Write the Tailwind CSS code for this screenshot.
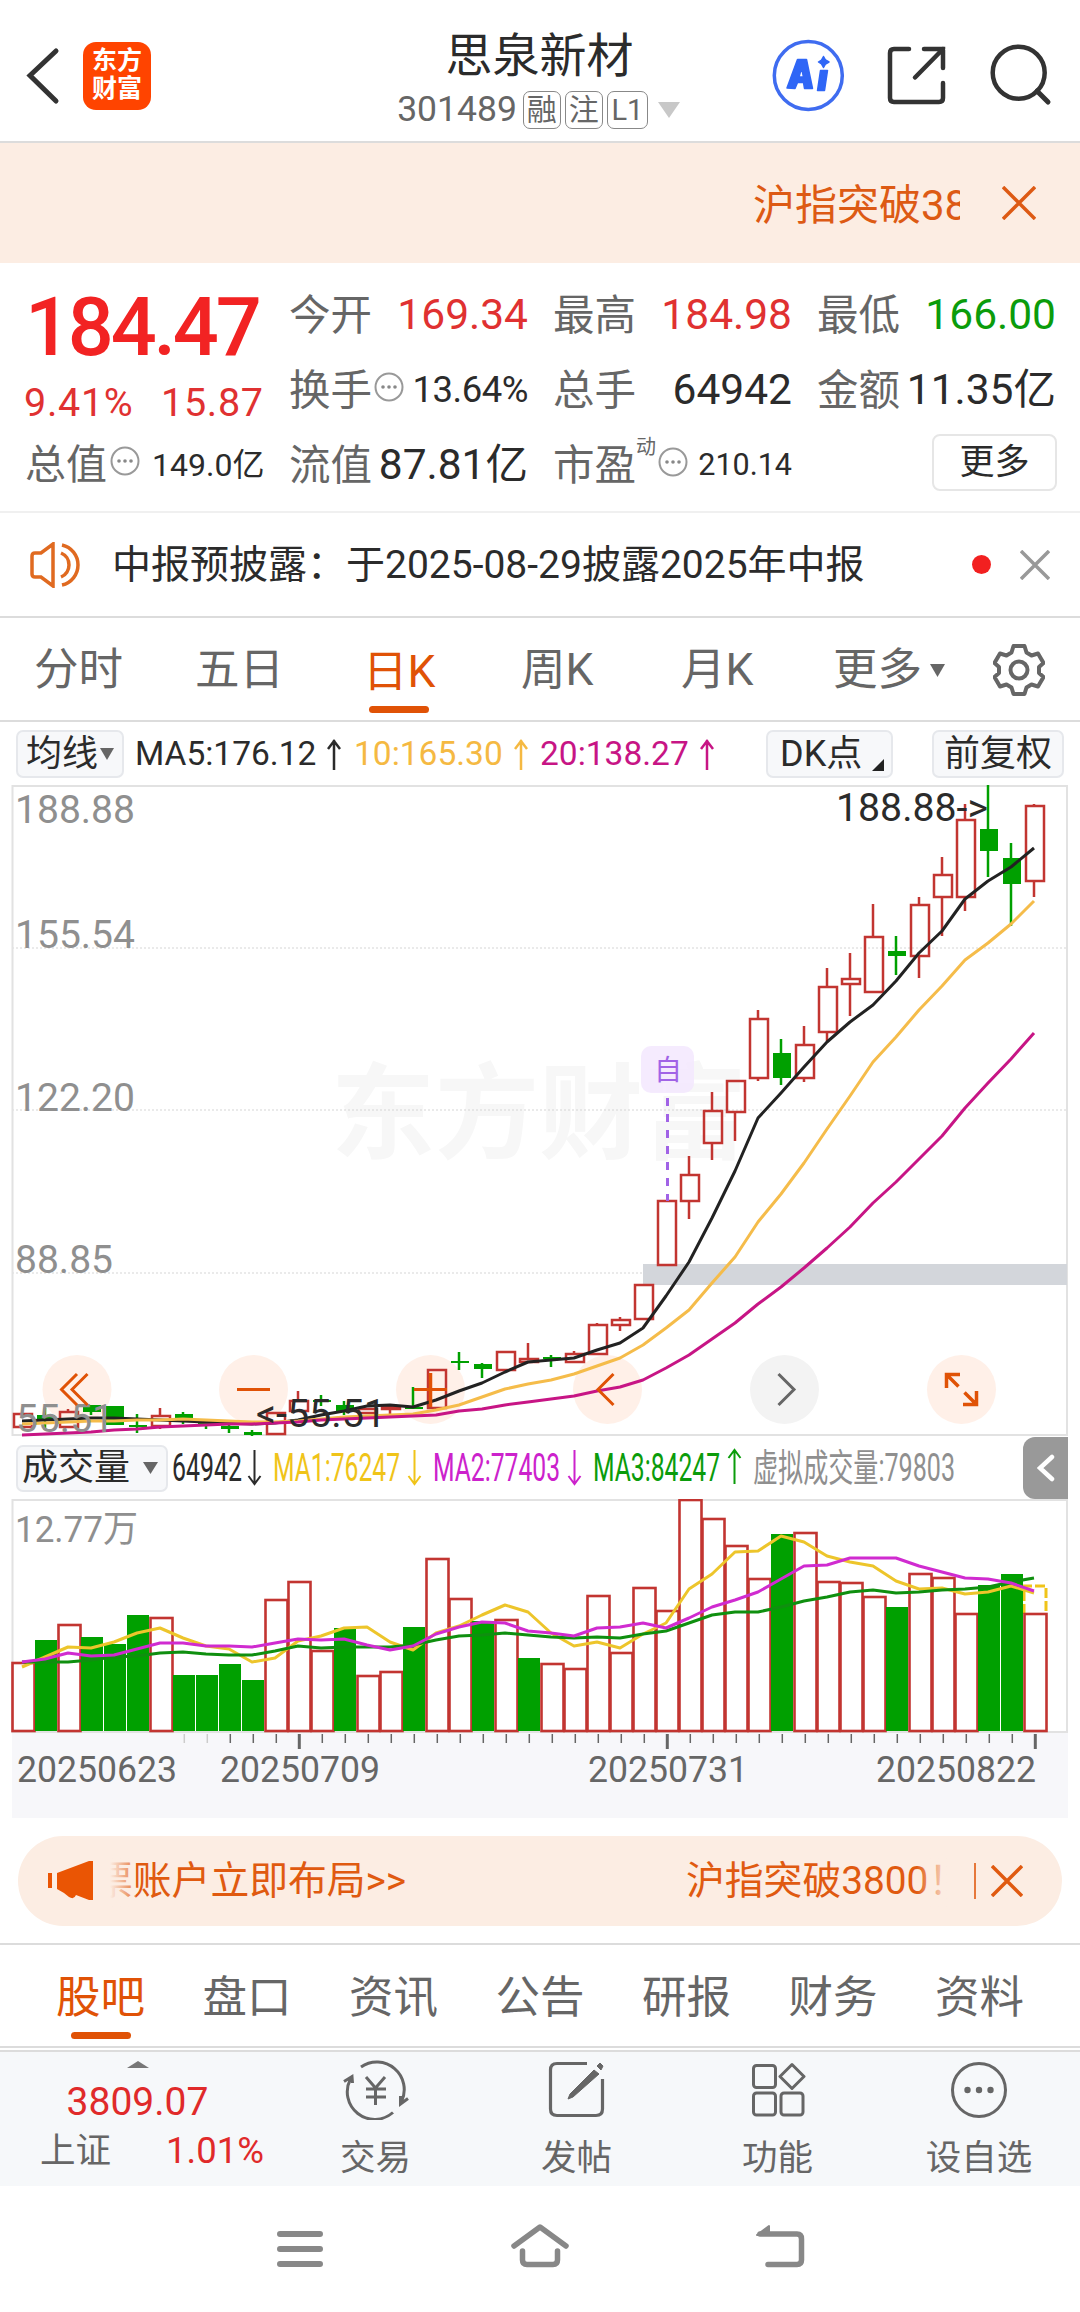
<!DOCTYPE html>
<html lang="zh-CN">

<head>
    <meta charset="UTF-8">
    <meta name="viewport" content="width=device-width, initial-scale=1.0">
    <title>思泉新材 301489</title>
    <script src="https://cdn.jsdelivr.net/npm/@tailwindcss/browser@4"></script>
</head>

<body class="w-[1080px] h-[2312px] overflow-hidden bg-white text-[#2b2b2b] leading-none whitespace-nowrap font-['Roboto','Noto_Sans_CJK_SC',sans-serif]">

    <!-- Header -->
    <header class="h-[143px] border-b-2 border-[#dcdcdc] flex">
        <div class="w-[398px] flex items-start pl-[26px] pt-[42px]">
            <svg class="w-[34px] h-[67px]" viewBox="26 42 34 67" fill="none" stroke="#333" stroke-width="5"><path d="M56 51 30 75.500 56 101" stroke-linecap="round" /></svg>
            <div class="ml-[23px] w-[68px] h-[68px] rounded-[13px] bg-[#ff4400] text-white text-[25px] leading-[28px] font-bold text-center pt-[5px]">东方<br>财富</div>
        </div>
        <div class="w-[283px] flex flex-col items-center pt-[33px]">
            <h1 class="text-[47px] leading-[46px]">思泉新材</h1>
            <div class="mt-[12px] -ml-[2px] flex items-center text-[#666]">
                <span class="text-[35.500px]">301489</span>
                <span class="ml-[6px] w-[38px] h-[38px] border-[1.500px] border-[#888] rounded-[7px] text-[30px] flex items-center justify-center">融</span>
                <span class="ml-[4px] w-[38px] h-[38px] border-[1.500px] border-[#888] rounded-[7px] text-[30px] flex items-center justify-center">注</span>
                <span class="ml-[4px] w-[41px] h-[38px] border-[1.500px] border-[#888] rounded-[7px] text-[29px] flex items-center justify-center">L1</span>
                <svg class="ml-[10px] w-[22px] h-[16px]" viewBox="0 0 22 16"><path d="M0 0h22L11 16z" fill="#c8c8c8" /></svg>
            </div>
        </div>
        <div class="ml-auto pr-[28px] pt-[39px] flex">
            <svg class="w-[280px] h-[74px]" viewBox="772 39 280 74" fill="none" stroke="#333" stroke-width="4.500">
                <circle cx="808.300" cy="75.500" r="34" stroke="#3f6cf0" stroke-width="3.500" />
                <g fill="#2f66f6" stroke="#2f66f6" stroke-width="1.500" stroke-linejoin="round">
                    <path d="M787 88 797.500 59.500H806.500L812.500 88.500H804.500L803.500 82.500H797.500L795 88.500zM801.500 68 799 77H803.500z" fill-rule="evenodd" />
                    <path d="M820.500 70.500H827.500L824.500 90.500H817.500z" />
                    <path d="M823.500 56.500 825.500 60 829 62 825.500 64 823.500 67.500 821.500 64 818.500 62 821.500 60z" />
                </g>
                <path d="M909 49H894Q890 49 890 53V98Q890 102 894 102H939Q943 102 943 98V83M924 49H943V68M943 49 915 77.500" stroke-linecap="round" />
                <circle cx="1018.700" cy="72.700" r="26" />
                <path d="M1037 91 1048 102" stroke-width="5" stroke-linecap="round" />
            </svg>
        </div>
    </header>

    <!-- Marquee -->
    <div class="h-[120px] bg-[#fcede3] text-[#dd5a14] flex items-center pl-[753px]">
        <div class="w-[207px] overflow-hidden text-[42px] leading-[60px] pt-[5px]">沪指突破3800！</div>
        <svg class="ml-[42px] w-[34px] h-[34px]" viewBox="0 0 34 34" stroke="currentColor" stroke-width="3.500"><path d="M1 1 33 33M33 1 1 33" /></svg>
    </div>

    <!-- Quote -->
    <section class="h-[250px] border-b-2 border-[#f0f0f0] pl-[24px] pt-[14px] flex">
        <div class="w-[265px]">
            <div class="h-[90px] flex items-center pt-[11px] pl-[1px] text-[81px] font-medium text-[#f22323] tracking-[-3.200px]">184.47</div>
            <div class="h-[70px] flex items-center pt-[2px] text-[39.500px] text-[#e03131] tracking-[0.700px]"><span class="w-[137px]">9.41%</span><span>15.87</span></div>
            <div class="h-[56px] flex items-center pl-[1px] text-[#666] text-[41px]">总值
                <svg class="ml-[3px] mb-[8px] w-[30px] h-[30px]" viewBox="0 0 30 30"><use href="#info" /></svg>
                <span class="ml-[12px] text-[32px] text-[#2b2b2b]">149.0亿</span>
            </div>
        </div>
        <div class="w-[790px] grid grid-cols-[239px_239px_239px] gap-x-[25px] auto-rows-[75px] pt-[1px] text-[41.500px] text-[#666]">
            <div class="flex items-center justify-between">今开<span class="text-[42.500px] text-[#e03131]">169.34</span></div>
            <div class="flex items-center justify-between">最高<span class="text-[42.500px] text-[#e03131]">184.98</span></div>
            <div class="flex items-center justify-between">最低<span class="text-[42.500px] text-[#0b9c0b]">166.00</span></div>
            <div class="flex items-center justify-between">换手
                <svg class="mb-[8px] -ml-[6px] w-[30px] h-[30px]" viewBox="0 0 30 30"><use href="#info" /></svg>
                <span class="text-[36.500px] text-[#2b2b2b] tracking-[-0.500px]">13.64%</span>
            </div>
            <div class="flex items-center justify-between">总手<span class="text-[42.500px] text-[#2b2b2b]">64942</span></div>
            <div class="flex items-center justify-between">金额<span class="text-[42.500px] text-[#2b2b2b]">11.35亿</span></div>
            <div class="flex items-center justify-between">流值<span class="text-[42.500px] text-[#2b2b2b]">87.81亿</span></div>
            <div class="flex items-center">市盈<span class="mb-[38px] text-[20px]">动</span>
                <svg class="mb-[8px] ml-[2px] w-[30px] h-[30px]" viewBox="0 0 30 30"><use href="#info" /></svg>
                <span class="ml-auto text-[30.500px] text-[#2b2b2b]">210.14</span>
            </div>
            <div class="flex items-center justify-end"><button class="w-[125px] h-[57px] border-2 border-[#e6e6e6] rounded-[8px] text-[35px] leading-[35px] text-[#2b2b2b] -mr-[1px] mb-[6px]">更多</button></div>
        </div>
    </section>

    <svg class="hidden">
        <g id="info">
            <circle cx="15" cy="15" r="13.500" fill="none" stroke="#999" stroke-width="2" />
            <g fill="#888"><circle cx="9" cy="15" r="1.800" /><circle cx="15" cy="15" r="1.800" /><circle cx="21" cy="15" r="1.800" /></g>
        </g>
    </svg>

    <!-- Notice -->
    <div class="h-[105px] border-b-2 border-[#dcdcdc] flex items-center pl-[29px]">
        <svg class="w-[54px] h-[46px]" viewBox="28 542 54 46" fill="none" stroke="#e06a20" stroke-width="3.500"><path d="M52 544V586L40 577H34Q31 577 31 574V556Q31 553 34 553H40L52 544zM60 553A13 13 0 0 1 60 577M61 545A20.500 20.500 0 0 1 61 585" /></svg>
        <span class="ml-[29px] pt-[2px] text-[39px]">中报预披露：于2025-08-29披露2025年中报</span>
        <span class="ml-auto w-[19px] h-[19px] rounded-full bg-[#f22020]"></span>
        <svg class="ml-[29px] mr-[30px] w-[30px] h-[30px]" viewBox="0 0 30 30" stroke="#999" stroke-width="3.500"><path d="M1 1 29 29M29 1 1 29" /></svg>
    </div>

    <!-- Period tabs -->
    <nav class="h-[104px] border-b-2 border-[#dcdcdc] flex items-center text-[44.500px] text-[#666]">
        <a class="ml-[34px] pt-[3px] w-[161px]">分时</a>
        <a class="w-[168px] pt-[3px]">五日</a>
        <a class="w-[158px] h-full flex flex-col justify-between pt-[32px] pb-[7px] text-[#e05206]">日K<i class="ml-[6px] w-[60px] h-[7px] rounded-full bg-[#e05206]"></i></a>
        <a class="w-[160px] pt-[3px]">周K</a>
        <a class="w-[152px] pt-[3px]">月K</a>
        <a class="flex items-center pt-[3px]">更多<svg class="ml-[8px] w-[15px] h-[13px]" viewBox="0 0 15 13"><path d="M0 0h15L7.500 13z" fill="#666" /></svg></a>
        <svg class="ml-[48px] mt-[1px] w-[52px] h-[52px]" viewBox="-26 -26 52 52" fill="none" stroke="#666" stroke-width="4" stroke-linejoin="round">
            <path d="M-5.500 -24H5.500L7.500 -17.500 12.500 -14.500 19 -16.500 24.500 -7 20 -3V3L24.500 7 19 16.500 12.500 14.500 7.500 17.500 5.500 24H-5.500L-7.500 17.500 -12.500 14.500 -19 16.500 -24.500 7 -20 3V-3L-24.500 -7 -19 -16.500 -12.500 -14.500 -7.500 -17.500z" />
            <circle r="8.500" />
        </svg>
    </nav>

    <!-- MA legend -->
    <div class="h-[63px] flex items-center pl-[16px] text-[33.500px]">
        <div class="w-[108px] h-[48px] border-2 border-[#e6e8ec] bg-[#f7f8fa] rounded-[7px] flex items-center justify-center text-[36px]">均线<svg class="ml-[2px] w-[14px] h-[12px]" viewBox="0 0 14 12"><path d="M0 0h14L7 12z" fill="#666" /></svg></div>
        <div class="ml-[11px] w-[219px] flex items-center">MA5:176.12<svg class="ml-[10px] w-[16px] h-[32px]" viewBox="0 0 16 32"><use href="#up" /></svg></div>
        <div class="w-[186px] flex items-center text-[#f5b942]">10:165.30<svg class="ml-[10px] w-[16px] h-[32px]" viewBox="0 0 16 32"><use href="#up" /></svg></div>
        <div class="w-[226px] flex items-center text-[#c71585]">20:138.27<svg class="ml-[10px] w-[16px] h-[32px]" viewBox="0 0 16 32"><use href="#up" /></svg></div>
        <div class="w-[127px] h-[48px] border-2 border-[#e6e8ec] bg-[#f7f8fa] rounded-[7px] flex items-center pl-[12px] text-[36px]">DK点<svg class="ml-[10px] mt-[22px] w-[12px] h-[12px]" viewBox="0 0 12 12"><path d="M12 0V12H0z" fill="#222" /></svg></div>
        <div class="ml-[39px] w-[132px] h-[48px] border-2 border-[#e6e8ec] bg-[#f7f8fa] rounded-[7px] flex items-center justify-center text-[36px]">前复权</div>
    </div>

    <svg class="hidden">
        <g id="up" fill="none" stroke="currentColor" stroke-width="2.500"><path d="M8 32V2M2 11 8 3 14 11" /></g>
    </svg>

    <!-- Candle chart -->
    <svg id="kline" class="block w-[1080px] h-[652px]" viewBox="0 785 1080 652" fill="none"></svg>

    <!-- Volume legend -->
    <div class="h-[62px] flex items-center pl-[16px]">
        <div class="w-[152px] h-[47px] border-2 border-[#e6e8ec] bg-[#f7f8fa] rounded-[7px] flex items-center pl-[4px] text-[36px]">成交量<svg class="ml-[13px] w-[15px] h-[12px]" viewBox="0 0 15 12"><path d="M0 0h15L7.500 12z" fill="#666" /></svg></div>
        <svg id="vol-legend" class="w-[855px] h-[62px]" viewBox="168 1437 855 62" font-size="38"></svg>
        <div class="w-[45px] h-[62px] rounded-l-[12px] bg-[#999] flex items-center justify-center">
            <svg class="w-[18px] h-[28px]" viewBox="0 0 18 28" fill="none" stroke="#fff" stroke-width="4.500" stroke-linecap="round"><path d="M15 3 3 14 15 25" /></svg>
        </div>
    </div>

    <!-- Volume chart -->
    <svg id="volume" class="block w-[1080px] h-[319px]" viewBox="0 1499 1080 319" fill="none"></svg>

    <!-- Promo -->
    <div class="mt-[18px] mx-[18px] h-[90px] rounded-full bg-[#fcede3] text-[#e05a10] flex items-center pl-[30px] text-[38.800px]">
        <svg class="w-[46px] h-[40px]" viewBox="48 1861 46 40" fill="#ea5504"><path d="M48 1873h4v15h-4zM57 1873 89 1861H93V1900H89L76 1895Q74 1900 69 1897L64 1893 57 1889z" /></svg>
        <div class="relative ml-[16px] w-[840px] h-[60px] overflow-hidden flex items-center">
            <span class="-ml-[16px] w-[592px] shrink-0">票账户立即布局&gt;&gt;</span><span>沪指突破3800！</span>
            <i class="absolute left-0 top-0 w-[26px] h-full bg-linear-to-r from-[#fcede3] to-[#fcede3]/20"></i>
            <i class="absolute right-0 top-0 w-[34px] h-full bg-linear-to-l from-[#fcede3] to-[#fcede3]/0"></i>
        </div>
        <i class="ml-[24px] w-[2px] h-[36px] bg-[#e05a10]/80"></i>
        <svg class="ml-[15px] w-[32px] h-[32px]" viewBox="0 0 32 32" stroke="currentColor" stroke-width="3.500"><path d="M1 1 31 31M31 1 1 31" /></svg>
    </div>

    <!-- Info tabs -->
    <nav class="mt-[17px] h-[105px] border-y-2 border-[#dcdcdc] pl-[56px] flex text-[44.500px] text-[#666] pt-[31px]">
        <a class="w-[146.500px] text-[#e05206]">股吧<i class="block mt-[11px] ml-[15px] w-[60px] h-[7px] rounded-full bg-[#e05206]"></i></a>
        <a class="w-[146.500px]">盘口</a>
        <a class="w-[146.500px]">资讯</a>
        <a class="w-[146.500px]">公告</a>
        <a class="w-[146.500px]">研报</a>
        <a class="w-[146.500px]">财务</a>
        <a>资料</a>
    </nav>

    <!-- Bottom bar -->
    <footer class="mt-[2px] h-[136px] border-t-2 border-[#dcdcdc] bg-[#f6f8fa] flex text-[#666] text-[35.500px]">
        <div class="w-[275px] flex flex-col items-center pt-[9px]">
            <svg class="w-[22px] h-[7px]" viewBox="0 0 22 7"><path d="M11 0 22 7H0z" fill="#777" /></svg>
            <span class="mt-[15px] text-[39px] text-[#e02a2a]">3809.07</span>
            <div class="mt-[11px] w-full pl-[40px] flex items-center">上证<span class="ml-[55px] text-[36.500px] text-[#e02a2a]">1.01%</span></div>
        </div>
        <div class="w-[201px] flex flex-col items-center pt-[8px]">
            <svg class="w-[68px] h-[60px]" viewBox="342 2060 68 60" fill="none" stroke="#666" stroke-width="3"><path d="M361 2067A27.500 27.500 0 0 1 401.500 2101.500M408 2098.500 400.500 2104 400.500 2096M393 2112.500A27.500 27.500 0 0 1 350.500 2079M344 2081.500 352 2076.500 352.500 2083" /><path d="M366 2077 375.500 2088 385 2077M375.500 2088V2105M366 2089h20M366 2097h20" /></svg>
            <span class="mt-[21px]">交易</span>
        </div>
        <div class="w-[201px] flex flex-col items-center pt-[8px]">
            <svg class="w-[60px] h-[60px]" viewBox="548 2060 60 60" fill="none" stroke="#666" stroke-width="3.200"><path d="M588 2063.500H558Q551.500 2063.500 551.500 2070V2109Q551.500 2115.500 558 2115.500H597Q603.500 2115.500 603.500 2109V2079" /><path d="M601 2063 604 2066 602 2070 598 2066zM595 2070 600 2074 574 2097 569 2099 571 2094z" fill="#666" stroke="#666" stroke-width="1" /></svg>
            <span class="mt-[21px]">发帖</span>
        </div>
        <div class="w-[201px] flex flex-col items-center pt-[8px]">
            <svg class="w-[56px] h-[60px]" viewBox="750 2060 56 60" fill="none" stroke="#666" stroke-width="3"><rect x="753.500" y="2065.500" width="22" height="22" rx="3" /><rect x="753.500" y="2093" width="22" height="22" rx="3" /><rect x="781" y="2093" width="22" height="22" rx="3" /><path d="M792 2064.500 804 2076.500 792 2088.500 780 2076.500z" stroke-linejoin="round" /></svg>
            <span class="mt-[21px]">功能</span>
        </div>
        <div class="w-[202px] flex flex-col items-center pt-[8px]">
            <svg class="w-[60px] h-[60px]" viewBox="0 0 60 60"><circle cx="30" cy="30" r="26.500" fill="none" stroke="#666" stroke-width="3" /><g fill="#666"><circle cx="18.500" cy="30" r="3.200" /><circle cx="30" cy="30" r="3.200" /><circle cx="41.500" cy="30" r="3.200" /></g></svg>
            <span class="mt-[21px]">设自选</span>
        </div>
    </footer>

    <!-- System navigation -->
    <div class="h-[126px] pl-[277px] pt-[36px] flex">
        <svg class="w-[46px] h-[48px]" viewBox="277 2222 46 48" stroke="#888" stroke-width="6" stroke-linecap="round"><path d="M280 2234H320M280 2249H320M280 2264H320" /></svg>
        <svg class="ml-[187px] w-[60px] h-[48px]" viewBox="510 2222 60 48" fill="none" stroke="#888" stroke-width="5.500" stroke-linecap="round"><path d="M514 2246 540 2227 566 2246" stroke-linejoin="round" /><path d="M522.500 2251V2260Q522.500 2264.500 527 2264.500H553Q557.500 2264.500 557.500 2260V2251" /></svg>
        <svg class="ml-[185px] w-[52px] h-[48px]" viewBox="755 2222 52 48" fill="none" stroke="#888" stroke-width="5.500" stroke-linecap="round"><path d="M760 2234H797Q801.500 2234 801.500 2239V2260Q801.500 2264.500 797 2264.500H768" /><path d="M757 2235 769 2226V2235z" fill="#888" stroke-width="2" stroke-linejoin="round" /></svg>
    </div>

    <script>
        const RED = "#c23531", GREEN = "#00a000";
        const px = i => 22 + i * 23;

        // [up?, body top, body bottom, wick top, wick bottom]
        const candles = [
            [1, 1414, 1427, 1414, 1427], [0, 1415, 1421, 1408, 1430], [1, 1412, 1427, 1409, 1427], [0, 1405, 1412, 1405, 1415],
            [0, 1406, 1425, 1406, 1425], [0, 1425, 1427, 1414, 1433], [1, 1416, 1426, 1408, 1429], [0, 1414, 1418, 1412, 1424],
            [0, 1423, 1425, 1421, 1429], [0, 1426, 1429, 1424, 1433], [0, 1432, 1435, 1430, 1436], [1, 1413, 1434, 1413, 1434],
            [1, 1401, 1411, 1391, 1411], [0, 1400, 1402, 1395, 1406], [0, 1405, 1411, 1401, 1415], [1, 1409, 1413, 1409, 1413],
            [1, 1407, 1409, 1407, 1414], [0, 1407, 1409, 1387, 1409], [1, 1370, 1408, 1370, 1408], [0, 1361, 1363, 1352, 1370],
            [0, 1364, 1369, 1363, 1378], [1, 1352, 1370, 1352, 1370], [1, 1359, 1362, 1343, 1362], [0, 1357, 1359, 1355, 1367],
            [1, 1354, 1362, 1351, 1363], [1, 1325, 1354, 1323, 1354], [1, 1320, 1325, 1317, 1331], [1, 1285, 1319, 1285, 1319],
            [1, 1201, 1265, 1201, 1265], [1, 1175, 1201, 1156, 1219], [1, 1111, 1143, 1092, 1160], [1, 1081, 1112, 1081, 1141],
            [1, 1019, 1078, 1010, 1081], [0, 1053, 1078, 1039, 1085], [1, 1045, 1078, 1026, 1082], [1, 987, 1032, 968, 1041],
            [1, 979, 984, 953, 1016], [1, 937, 992, 904, 992], [0, 951, 956, 936, 975], [1, 905, 956, 897, 978],
            [1, 875, 897, 857, 936], [1, 820, 897, 804, 911], [0, 829, 851, 785, 877], [0, 858, 884, 843, 926],
            [1, 806, 881, 804, 897]
        ];
        const ma5 = [1421, 1420, 1419, 1418, 1418, 1419, 1420, 1421, 1422, 1423, 1424, 1423, 1420, 1415, 1411, 1406, 1405, 1407, 1400, 1391, 1383, 1372, 1362, 1360, 1358, 1350, 1343, 1328, 1296, 1262, 1218, 1171, 1118, 1093, 1067, 1042, 1022, 1005, 981, 953, 931, 899, 881, 867, 848];
        const ma10 = [1424, 1423, 1422, 1421, 1421, 1420, 1420, 1419, 1420, 1421, 1422, 1422, 1421, 1419, 1417, 1416, 1415, 1414, 1410, 1405, 1397, 1389, 1384, 1380, 1374, 1366, 1358, 1345, 1328, 1310, 1283, 1257, 1222, 1194, 1163, 1129, 1096, 1062, 1037, 1010, 986, 960, 943, 924, 901];
        const ma20 = [1435, 1434, 1433, 1432, 1430, 1429, 1427, 1426, 1425, 1424, 1424, 1423, 1422, 1420, 1419, 1418, 1417, 1416, 1415, 1411, 1409, 1405, 1402, 1399, 1396, 1391, 1387, 1380, 1368, 1355, 1339, 1323, 1304, 1287, 1268, 1248, 1227, 1203, 1182, 1159, 1136, 1108, 1083, 1059, 1033];

        // bar tops, direction follows the sign
        const volumes = [1663, -1640, 1625, -1637, -1644, -1615, 1618, -1675, -1675, -1664, -1680, 1600, 1582, 1651, -1628, 1676, 1672, -1627, 1559, 1599, -1621, 1620, -1658, 1664, 1669, 1596, 1653, 1588, 1611, 1500, 1519, 1546, 1579, -1534, 1533, 1582, 1583, 1597, -1607, 1574, 1578, 1614, -1585, -1574, 1614];
        const vma1 = [1667, 1657, 1647, 1648, 1642, 1633, 1628, 1638, 1646, 1649, 1662, 1658, 1641, 1636, 1628, 1627, 1642, 1650, 1633, 1626, 1615, 1605, 1612, 1633, 1646, 1642, 1648, 1634, 1623, 1589, 1574, 1552, 1551, 1536, 1542, 1556, 1562, 1566, 1581, 1589, 1588, 1594, 1592, 1586, 1593];
        const vma2 = [1662, 1659, 1653, 1656, 1655, 1649, 1643, 1643, 1646, 1646, 1647, 1643, 1639, 1640, 1639, 1645, 1650, 1646, 1634, 1627, 1622, 1623, 1631, 1633, 1636, 1628, 1627, 1623, 1628, 1618, 1607, 1600, 1592, 1579, 1566, 1565, 1558, 1558, 1558, 1566, 1572, 1578, 1579, 1583, 1591];
        const vma3 = [1662, 1662, 1662, 1660, 1657, 1656, 1653, 1652, 1654, 1655, 1655, 1651, 1646, 1648, 1647, 1647, 1647, 1645, 1640, 1636, 1635, 1633, 1635, 1637, 1638, 1637, 1638, 1634, 1631, 1623, 1615, 1612, 1612, 1607, 1601, 1597, 1592, 1590, 1593, 1592, 1590, 1589, 1587, 1582, 1578];

        const line = (data, color) => `<polyline points="${data.map((y, i) => px(i) + "," + y).join(" ")}" stroke="${color}" stroke-width="3" stroke-linejoin="round"/>`;
        const text = (x, y, s, color, size, len) => `<text x="${x}" y="${y}" fill="${color}" font-size="${size}" ${len ? `textLength="${len}" lengthAdjust="spacingAndGlyphs"` : ""}>${s}</text>`;

        // Candle chart
        let k = `<text x="331" y="1151" font-size="104" font-weight="700" fill="#f7f7f7">东方财富</text>`;
        [948, 1110, 1273].forEach(y => k += `<path d="M12 ${y}H1067" stroke="#d5d5d5" stroke-width="1" stroke-dasharray="2 2"/>`);
        k += `<path d="M12.500 1435V786H1067V1435z" stroke="#e2e2e2" stroke-width="2"/>`;
        k += `<rect x="643" y="1264" width="424" height="21" fill="#d3d6db"/>`;
        [77, 253.5, 430.5, 607.5, 784.5, 961.5].forEach((x, i) => k += `<circle cx="${x}" cy="1389.500" r="34.500" fill="${i === 4 ? "#f3f3f3" : "#fff0e8"}"/>`);
        candles.forEach(([up, t, b, wt, wb], i) => {
            const x = px(i);
            if (up) {
                k += `<path d="M${x} ${wt}V${t}M${x} ${b}V${wb}" stroke="${RED}" stroke-width="2.500"/>`;
                k += `<rect x="${x - 8}" y="${t}" width="18" height="${b - t}" stroke="${RED}" stroke-width="2.500"/>`;
            } else {
                k += `<path d="M${x} ${wt}V${wb}" stroke="${GREEN}" stroke-width="2.500"/>`;
                k += `<rect x="${x - 8}" y="${t}" width="18" height="${b - t}" fill="${GREEN}"/>`;
            }
        });
        k += `<path d="M667.500 1098V1201" stroke="#a163e6" stroke-width="3" stroke-dasharray="8 8"/>`;
        k += `<rect x="641" y="1046" width="53" height="47" rx="10" fill="#f2e6fe" fill-opacity="0.800"/>` + text(654, 1080, "自", "#a163e6", 28);
        k += line(ma5, "#222") + line(ma10, "#f5bc4a") + line(ma20, "#c71585");
        k += text(15, 823, "188.88", "#8f8f8f", 38, 120) + text(15, 948, "155.54", "#8f8f8f", 38, 120) + text(15, 1110.5, "122.20", "#8f8f8f", 38, 120) + text(15, 1273, "88.85", "#8f8f8f", 38, 98) + text(16, 1432, "55.51", "#8f8f8f", 38, 98);
        k += text(836, 821, "188.88-&gt;", "#2b2b2b", 39, 152) + text(256, 1427, "&lt;-55.51", "#2b2b2b", 38.5, 130);
        k += `<g stroke="#e05206" stroke-width="3"><path d="M77 1374 61.500 1389.500 77 1405M87.500 1374 72 1389.500 87.500 1405M237 1389.500H270M414 1389.500H447M613.500 1374 598 1389.500 613.500 1405"/><path d="M430.500 1373V1407" stroke-width="3.500"/><path d="M960 1374.500H946.500V1388M946.500 1374.500 958.500 1386.500M963 1404.500H976.500V1391M976.500 1404.500 964.500 1392.500" stroke-width="3.500"/></g>`;
        k += `<path d="M778.500 1374 794 1389.500 778.500 1405" stroke="#666" stroke-width="3"/>`;
        document.getElementById("kline").innerHTML = k;

        // Volume legend
        const arrow = (x, color, up) => `<path d="M${x} 1450V1484M${x - 6} ${up ? 1458 : 1476} ${x} ${up ? 1450 : 1484} ${x + 6} ${up ? 1458 : 1476}" stroke="${color}" stroke-width="2" fill="none"/>`;
        document.getElementById("vol-legend").innerHTML =
            text(172, 1481, "64942", "#2b2b2b", 38, 70) + arrow(254.5, "#2b2b2b") +
            text(273, 1481, "MA1:76247", "#f0c419", 38, 127) + arrow(414.5, "#f0c419") +
            text(433, 1481, "MA2:77403", "#cc22cc", 38, 127) + arrow(574.5, "#cc22cc") +
            text(593, 1481, "MA3:84247", "#0b9c0b", 38, 127) + arrow(734.5, "#0b9c0b", true) +
            text(753, 1481, "虚拟成交量:79803", "#8f8f8f", 38, 202);

        // Volume chart
        let v = `<rect x="12" y="1733" width="1056" height="85" fill="#f7f7fa"/><path d="M12.500 1732V1500H1067V1732z" stroke="#e2e2e2" stroke-width="2"/>`;
        v += text(15, 1542, "12.77万", "#8f8f8f", 37, 123);
        v += `<path d="M1024 1614V1586H1046V1614" stroke="#f0c419" stroke-width="3" stroke-dasharray="10 3"/>`;
        volumes.forEach((t, i) => {
            const x = px(i);
            v += t < 0
                ? `<rect x="${x - 10}" y="${-t}" width="22" height="${1731 + t}" fill="${GREEN}"/>`
                : `<rect x="${x - 9.5}" y="${t}" width="22" height="${1731 - t}" stroke="${RED}" stroke-width="2.600"/>`;
        });
        v += line(vma1, "#edc52b") + line(vma3, "#0f8f0f") + line(vma2, "#d02bd0");
        for (let i = 7; i < 45; i++) {
            const major = (i - 12) % 16 === 0;
            v += `<path d="M${px(i) + 1.3} 1734V${major ? 1749 : 1743}" stroke="${i < 9 ? "#ccc" : "#666"}" stroke-width="${major ? 3 : 1.5}"/>`;
        }
        v += text(17, 1782, "20250623", "#666", 36.500, 160) + text(220, 1782, "20250709", "#666", 36.500, 160) + text(588, 1782, "20250731", "#666", 36.500, 160) + text(876, 1782, "20250822", "#666", 36.500, 160);
        document.getElementById("volume").innerHTML = v;
    </script>

</body>

</html>
